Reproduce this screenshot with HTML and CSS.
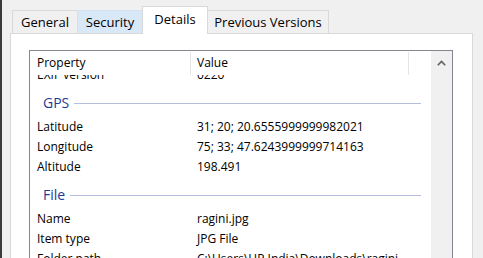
FILE: index.html
```html
<!DOCTYPE html>
<html lang="en">
<head>
    <meta charset="UTF-8">
    <meta name="viewport" content="width=device-width, initial-scale=1.0">
    <title>ragini.jpg Properties</title>
    <link rel="stylesheet" href="styles.css">
</head>
<body>
    <div class="desktop-edge"></div>
    <div class="dialog">
        <div class="tabs">
            <div class="tab tab-general">General</div>
            <div class="tab tab-security hover">Security</div>
            <div class="tab tab-details active">Details</div>
            <div class="tab tab-versions">Previous Versions</div>
        </div>

        <div class="panel">
            <div class="list">
                <div class="list-main">
                    <!-- Column headers -->
                    <div class="list-header">
                        <div class="head-cell head-prop">Property</div>
                        <div class="head-cell head-val">Value</div>
                    </div>

                    <div class="rows">
                        <div class="row first-row">
                            <div class="prop">EXIF version</div>
                            <div class="val">0220</div>
                        </div>

                        <div class="group">
                            <span class="group-title">GPS</span>
                            <span class="group-line"></span>
                        </div>
                        <div class="row">
                            <div class="prop">Latitude</div>
                            <div class="val">31; 20; 20.6555999999982021</div>
                        </div>
                        <div class="row">
                            <div class="prop">Longitude</div>
                            <div class="val">75; 33; 47.6243999999714163</div>
                        </div>
                        <div class="row">
                            <div class="prop">Altitude</div>
                            <div class="val">198.491</div>
                        </div>

                        <div class="group">
                            <span class="group-title">File</span>
                            <span class="group-line"></span>
                        </div>
                        <div class="row">
                            <div class="prop">Name</div>
                            <div class="val">ragini.jpg</div>
                        </div>
                        <div class="row">
                            <div class="prop">Item type</div>
                            <div class="val">JPG File</div>
                        </div>
                        <div class="row">
                            <div class="prop">Folder path</div>
                            <div class="val">C:\Users\HP India\Downloads\ragini</div>
                        </div>
                    </div>
                </div>

                <!-- Vertical scrollbar -->
                <div class="scrollbar">
                    <svg class="scroll-up" width="9" height="6" viewBox="0 0 9 6">
                        <polyline points="0.8,5.2 4.5,1.4 8.2,5.2" fill="none" stroke="#606060" stroke-width="1.6"/>
                    </svg>
                </div>
            </div>
        </div>
    </div>
</body>
</html>
```

FILE: styles.css
```css
body {
    margin: 0;
    height: 258px;
    overflow: hidden;
    display: flex;
    background-color: #f0f0f0;
    font-family: "Open Sans", "Liberation Sans", sans-serif;
    color: #000;
}

/* Dark sliver of whatever sits behind the dialog */
.desktop-edge {
    width: 2px;
    background-color: #3a3a3a;
}

.dialog {
    display: flex;
    flex-direction: column;
    padding: 7px 0 0 8px;
    width: 463px;
}

/* Tab strip */
.tabs {
    display: flex;
    align-items: flex-end;
    padding-left: 2px;
    height: 26px;
    position: relative;
    z-index: 2;
}

.tab {
    box-sizing: border-box;
    height: 23px;
    padding-top: 1px;
    line-height: 21px;
    font-size: 13px;
    text-align: center;
    border: 1px solid #d9d9d9;
    border-bottom: none;
    background-color: #f0f0f0;
    margin-left: -1px;
    white-space: nowrap;
}

.tab-general {
    width: 66px;
    margin-left: 0;
}

.tab-security {
    width: 66px;
}

.tab-details {
    width: 66px;
}

.tab-versions {
    width: 122px;
}

.tab.hover {
    background-color: #d9e8f6;
    border-color: #d3e1f0;
}

.tab.active {
    height: 28px;
    margin-bottom: -1px;
    padding-top: 0;
    line-height: 24px;
    background-color: #fff;
    border-color: #d9d9d9;
    position: relative;
    z-index: 3;
}

/* White page under the tabs */
.panel {
    flex: 1;
    background-color: #fff;
    border: 1px solid #d9d9d9;
    padding: 16px 19px 0 18px;
    display: flex;
    flex-direction: column;
}

.list {
    flex: 1;
    display: flex;
    border: 1px solid #828790;
    border-bottom: none;
    min-height: 0;
}

.list-main {
    flex: 1;
    display: flex;
    flex-direction: column;
    min-width: 0;
}

.list-header {
    display: flex;
    height: 24px;
    font-size: 12px;
    line-height: 23px;
}

.head-cell {
    box-sizing: border-box;
    border-right: 1px solid #e5e5e5;
    margin-top: 1px;
    height: 23px;
    line-height: 21px;
}

.head-prop {
    width: 161px;
    padding-left: 7px;
}

.head-val {
    width: 218px;
    padding-left: 6px;
}

.rows {
    flex: 1;
    overflow: hidden;
}

.row {
    display: flex;
    height: 20px;
    line-height: 20px;
    font-size: 12px;
    white-space: nowrap;
}

/* list is scrolled: the first row is half hidden under the header */
.first-row {
    margin-top: -10px;
}

.prop {
    box-sizing: border-box;
    flex: 0 0 167px;
    padding-left: 7px;
}

.group {
    display: flex;
    align-items: center;
    padding: 8px 10px 4px 13px;
    height: 20px;
}

.group-title {
    font-size: 14px;
    line-height: 20px;
    color: #1e3c96;
}

.group-line {
    flex: 1;
    height: 1px;
    margin-left: 5px;
    background-color: #b3bfdc;
}

.scrollbar {
    width: 21px;
    background-color: #f0f0f0;
    display: flex;
    flex-direction: column;
    align-items: center;
}

.scroll-up {
    margin-top: 9px;
}
```
